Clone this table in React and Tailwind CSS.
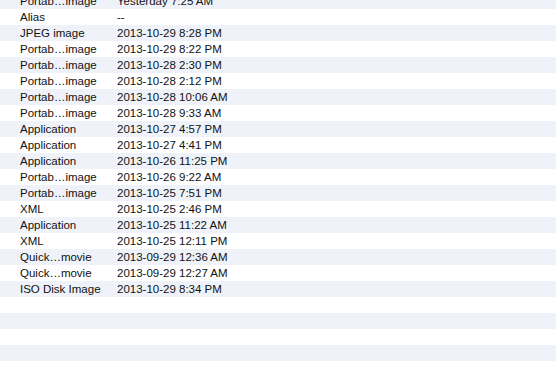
import React from "react";

const rows = [
  ["Portab…image", "Yesterday 7:25 AM"],
  ["Alias", "--"],
  ["JPEG image", "2013-10-29 8:28 PM"],
  ["Portab…image", "2013-10-29 8:22 PM"],
  ["Portab…image", "2013-10-28 2:30 PM"],
  ["Portab…image", "2013-10-28 2:12 PM"],
  ["Portab…image", "2013-10-28 10:06 AM"],
  ["Portab…image", "2013-10-28 9:33 AM"],
  ["Application", "2013-10-27 4:57 PM"],
  ["Application", "2013-10-27 4:41 PM"],
  ["Application", "2013-10-26 11:25 PM"],
  ["Portab…image", "2013-10-26 9:22 AM"],
  ["Portab…image", "2013-10-25 7:51 PM"],
  ["XML", "2013-10-25 2:46 PM"],
  ["Application", "2013-10-25 11:22 AM"],
  ["XML", "2013-10-25 12:11 PM"],
  ["Quick…movie", "2013-09-29 12:36 AM"],
  ["Quick…movie", "2013-09-29 12:27 AM"],
  ["ISO Disk Image", "2013-10-29 8:34 PM"],
  ["", ""],
  ["", ""],
  ["", ""],
  ["", ""],
  ["", ""],
];

export default function App() {
  return (
    <div className="w-[556px] h-[373px] overflow-hidden bg-white font-['Liberation_Sans',Arial,sans-serif] text-[11.5px] text-[#111]">
      <div className="-mt-[7px] flex flex-col">
        {rows.map(([kind, date], i) => (
          <div
            key={i}
            className={`flex h-[16px] items-center pt-[2px] ${i % 2 === 0 ? "bg-[#eff3f9]" : "bg-white"}`}
          >
            <div className="w-[117px] pl-[20px] whitespace-nowrap">{kind}</div>
            <div className="whitespace-nowrap">{date}</div>
          </div>
        ))}
      </div>
    </div>
  );
}
